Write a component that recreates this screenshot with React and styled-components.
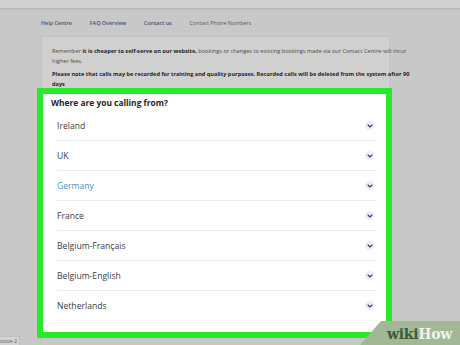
import { Fragment } from "react";
import styled, { createGlobalStyle } from "styled-components";

const countries = [
  { name: "Ireland" },
  { name: "UK" },
  { name: "Germany", active: true },
  { name: "France" },
  { name: "Belgium-Français" },
  { name: "Belgium-English" },
  { name: "Netherlands" },
];

const crumbs = ["Help Centre", "FAQ Overview", "Contact us"];

const GlobalStyle = createGlobalStyle`
  html, body {
    margin: 0;
    padding: 0;
    background: #c8c8c8;
    font-family: "Open Sans", "Liberation Sans", sans-serif;
    overflow: hidden;
  }
`;

const Page = styled.div`
  position: relative;
  width: 460px;
  height: 345px;
  overflow: hidden;
  background: #c8c8c8;
`;

const TopBar = styled.div`
  height: 8px;
  background: #d1d1d1;
  box-shadow: 0 1px 2px rgba(0, 0, 0, 0.12);
`;

const Breadcrumbs = styled.nav`
  display: flex;
  align-items: center;
  gap: 8px;
  height: 16px;
  margin-top: 7px;
  padding-left: 41px;
  font-size: 5.4px;
  font-weight: 600;
`;

const Crumb = styled.span`
  color: ${(props) => (props.current ? "#5a5a5a" : "#3f5672")};
  font-weight: ${(props) => (props.current ? 400 : 600)};
`;

const Sep = styled.span`
  color: #b3b3b3;
  font-size: 6px;
  font-weight: 400;
`;

const InfoCard = styled.div`
  margin: 5px 0 0 41px;
  width: 349px;
  height: 52px;
  padding: 9px 0 0 10px;
  box-sizing: border-box;
  background: #d0d0d0;
  border: 1px solid #c2c2c2;
  border-bottom: none;
  font-size: 5.6px;
  line-height: 10px;
  color: #4a4a4a;
`;

const Note = styled.p`
  margin: 0 0 3px;
  white-space: nowrap;
  b {
    color: #262626;
    font-weight: 700;
  }
`;

const Frame = styled.section`
  margin-left: 37px;
  width: 355px;
  height: 250px;
  box-sizing: border-box;
  border: 6px solid #27eb2a;
  background: #ffffff;
  padding: 0 9px 0 8px;
`;

const Question = styled.h2`
  margin: 0;
  height: 17px;
  line-height: 17px;
  font-size: 8.4px;
  font-weight: 700;
  color: #252525;
`;

const List = styled.ul`
  list-style: none;
  margin: 0 0 0 6px;
  padding: 0;
`;

const Row = styled.li`
  display: flex;
  align-items: center;
  justify-content: space-between;
  height: 30px;
  box-sizing: border-box;
  border-bottom: 1px solid ${(props) => (props.last ? "#f6f6f6" : "#ececec")};
  font-size: 8.6px;
  color: ${(props) => (props.active ? "#4b8fc2" : "#3c3c3c")};
`;

const Toggle = styled.span`
  display: flex;
  align-items: center;
  justify-content: center;
  width: 9px;
  height: 9px;
  margin-right: 3px;
  border-radius: 50%;
  background: #eceef3;
`;

const CardTail = styled.div`
  margin-left: 41px;
  height: 6px;
  border-left: 1px solid #bdbdbd;
`;

const Status = styled.div`
  position: absolute;
  left: 0;
  bottom: 0;
  padding: 0 2px 0 0;
  height: 8px;
  line-height: 8px;
  background: #d3d3d3;
  border-top: 1px solid #c0c0c0;
  border-right: 1px solid #c0c0c0;
  font-size: 5.5px;
  color: #666;
`;

const Badge = styled.div`
  position: absolute;
  right: 0;
  bottom: 0;
  width: 100px;
  height: 24px;
  display: flex;
  align-items: flex-end;
  justify-content: flex-end;
  padding: 0 8px 2px 0;
  box-sizing: border-box;
  background: #a2b795;
  clip-path: polygon(21% 0, 100% 0, 100% 100%, 0 100%);
  font-family: "DejaVu Serif", "Liberation Serif", serif;
  font-size: 14px;
  font-weight: 700;
  line-height: 18px;
  letter-spacing: -0.3px;
`;

const Wiki = styled.span`
  color: #3f5b35;
`;

const How = styled.span`
  color: #eff3ec;
`;

const Chevron = () => (
  <svg width="6" height="4" viewBox="0 0 6 4">
    <path d="M1 1 L3 3 L5 1" fill="none" stroke="#2d3f6b" strokeWidth="1.1" strokeLinecap="round" strokeLinejoin="round" />
  </svg>
);

const App = () => {
  return (
    <Page>
      <GlobalStyle />
      <TopBar />
      <Breadcrumbs>
        {crumbs.map((c) => (
          <Fragment key={c}>
            <Crumb>{c}</Crumb>
            <Sep>›</Sep>
          </Fragment>
        ))}
        <Crumb current>Contact Phone Numbers</Crumb>
      </Breadcrumbs>
      <InfoCard>
        <Note>
          Remember <b>it is cheaper to self-serve on our website,</b> bookings or changes to existing bookings made via our Contact Centre will incur
          <br />
          higher fees.
        </Note>
        <Note>
          <b>
            Please note that calls may be recorded for training and quality purposes. Recorded calls will be deleted from the system after 90
            <br />
            days
          </b>
        </Note>
      </InfoCard>
      <Frame>
        <Question>Where are you calling from?</Question>
        <List>
          {countries.map((c, i) => (
            <Row key={c.name} active={c.active} last={i === countries.length - 1}>
              {c.name}
              <Toggle>
                <Chevron />
              </Toggle>
            </Row>
          ))}
        </List>
      </Frame>
      <CardTail />
      <Status>oose-2</Status>
      <Badge>
        <Wiki>wiki</Wiki>
        <How>How</How>
      </Badge>
    </Page>
  );
};

export default App;
